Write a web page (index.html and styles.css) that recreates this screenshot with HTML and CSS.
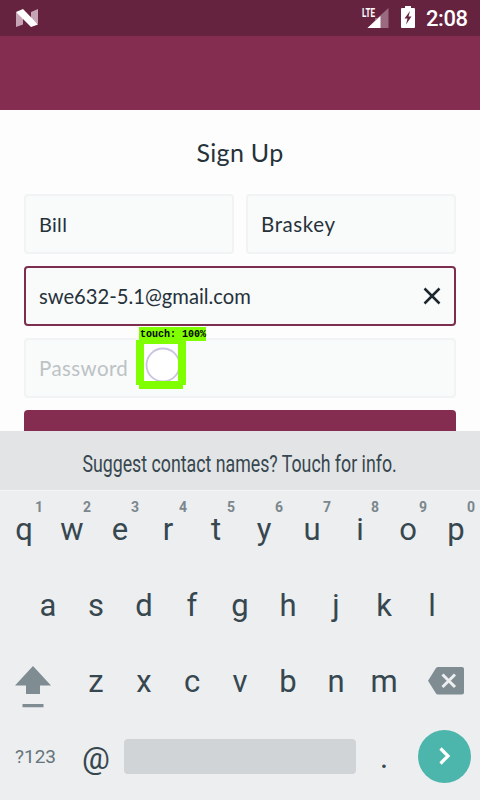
FILE: index.html
```html
<!DOCTYPE html>
<html lang="en">
<head>
<meta charset="utf-8">
<title>Sign Up</title>
<link rel="stylesheet" href="styles.css">
</head>
<body>
<div class="screen">
  <header class="status">
    <svg class="nlogo" width="22" height="18" viewBox="0 0 22 18"><path fill="#c6a4b5" d="M0 3 7 8V15.500L0 18ZM15 3 22 0V15L15 10Z"/><path fill="#fff" d="M0 3 7 0 22 15.500 15 18Z"/></svg>
    <div class="status-right">
      <svg class="signal" width="27" height="22" viewBox="0 0 27 22"><path fill="#9a6b80" d="M26.500 1V21H5.500L13 13.500V11H15.500Z"/><path fill="#fff" d="M18.500 9V21H5.500Z"/><text class="lte" x="0" y="10" textLength="13" lengthAdjust="spacingAndGlyphs">LTE</text></svg>
      <svg class="battery" width="14" height="22" viewBox="0 0 14 22"><path fill="#fff" d="M4 0H10V2H13Q14 2 14 3V21Q14 22 13 22H1Q0 22 0 21V3Q0 2 1 2H4Z"/><path fill="#66233f" d="M9 5 3.500 12.500H6.500L5 18.500 10.500 10.500H7.500Z"/></svg>
      <span class="clock">2:08</span>
    </div>
  </header>
  <div class="appbar"></div>
  <main class="content">
    <h1 class="title">Sign Up</h1>
    <div class="names">
      <div class="field"><span class="bill">Bill</span></div>
      <div class="field"><span class="last">Braskey</span></div>
    </div>
    <div class="field active"><span class="email">swe632-5.1@gmail.com</span>
      <svg width="18" height="18" viewBox="0 0 18 18"><path d="M1.500 1.500 16.500 16.500M16.500 1.500 1.500 16.500" stroke="#1d2730" stroke-width="2.500"/></svg>
    </div>
    <div class="field"><span class="placeholder">Password</span>
      <div class="touch">
        <span class="touch-label">touch: 100%</span>
        <svg width="50" height="49" viewBox="0 0 50 49"><path fill="#fff" d="M7 4H43V42H7Z"/><circle cx="27" cy="25" r="16.500" fill="none" stroke="#cbc4e0" stroke-width="1.800"/><path fill="#80ff00" fill-rule="evenodd" d="M0 0H50V45H47V49H3V45H0ZM8 4V41H42V4Z"/></svg>
      </div>
    </div>
    <div class="submit"></div>
  </main>
  <section class="keyboard">
    <div class="suggest"><span>Suggest contact names? Touch for info.</span></div>
    <div class="row">
      <div class="key">q<sup>1</sup></div><div class="key">w<sup>2</sup></div><div class="key">e<sup>3</sup></div><div class="key">r<sup>4</sup></div><div class="key">t<sup>5</sup></div><div class="key">y<sup>6</sup></div><div class="key">u<sup>7</sup></div><div class="key">i<sup>8</sup></div><div class="key">o<sup>9</sup></div><div class="key">p<sup>0</sup></div>
    </div>
    <div class="row middle">
      <div class="key">a</div><div class="key">s</div><div class="key">d</div><div class="key">f</div><div class="key">g</div><div class="key">h</div><div class="key">j</div><div class="key">k</div><div class="key">l</div>
    </div>
    <div class="row">
      <div class="key wide"><svg class="shift" width="36" height="42" viewBox="0 0 36 42"><path fill="#7f8c92" d="M18 0 36 19.500H25V28H11V19.500H0ZM7.500 38H28.500V41.300H7.500Z"/></svg></div>
      <div class="key">z</div><div class="key">x</div><div class="key">c</div><div class="key">v</div><div class="key">b</div><div class="key">n</div><div class="key">m</div>
      <div class="key wide"><svg class="delete" width="36" height="28" viewBox="0 0 36 28"><path fill="#7f8c92" d="M10 0H34Q36 0 36 2V25.500Q36 27.500 34 27.500H10Q8.800 27.500 8 26.500L0 13.800 8 1Q8.800 0 10 0Z"/><path d="M14.500 7.500 27 20M27 7.500 14.500 20" stroke="#eceef0" stroke-width="3"/></svg></div>
    </div>
    <div class="row">
      <div class="key wide symbols">?123</div>
      <div class="key at">@</div>
      <div class="space"></div>
      <div class="key period">.</div>
      <div class="enter"><svg width="12" height="18" viewBox="0 0 12 18"><path d="M1.500 1.500 9 9 1.500 16.500" fill="none" stroke="#fff" stroke-width="3.200"/></svg></div>
    </div>
  </section>
</div>
</body>
</html>
```

FILE: styles.css
```css
* { box-sizing: border-box; }
body { margin: 0; background: #fdfdfd; font-family: Roboto, sans-serif; }
svg { display: block; flex: none; }
.screen { width: 480px; height: 800px; overflow: hidden; display: flex; flex-direction: column; }
.status { height: 36px; flex: none; background: #66233f; display: flex; justify-content: space-between; padding: 0 12px 0 16px; }
.nlogo { margin-top: 9px; }
.status-right { display: flex; }
.signal { margin-top: 7px; overflow: visible; }
.battery { margin: 6px 0 0 12px; }
.lte { font: 700 13px Roboto, sans-serif; fill: #fff; }
.clock { color: #fff; font-size: 22px; font-weight: 500; line-height: 38px; margin-left: 11px; width: 42px; white-space: nowrap; letter-spacing: -0.4px; }
.appbar { height: 74px; flex: none; background: #842d50; }
.content { height: 321px; flex: none; overflow: hidden; padding: 26px 24px 0; display: flex; flex-direction: column; gap: 12px; font-family: Lato, sans-serif; color: #26323a; }
.title { margin: 0 0 16px; height: 30px; line-height: 32px; text-align: center; font-size: 25px; font-weight: 400; letter-spacing: 0.3px; }
.names { display: flex; gap: 12px; }
.names .field { flex: 1; }
.field { height: 60px; flex: none; border: 2px solid #f2f3f4; border-radius: 4px; background: #f9fafa; display: flex; align-items: center; padding: 0 13px; font-size: 20px; position: relative; }
.bill { letter-spacing: 0.3px; }
.last { font-size: 20.5px; letter-spacing: 0.6px; }
.email { font-size: 20.2px; }
.active { border-color: #7d2d4d; justify-content: space-between; }
.active svg { margin-top: -1px; }
.placeholder { color: #bcc3c5; font-size: 20.5px; letter-spacing: 0.4px; }
.touch { position: absolute; left: 110px; top: 0; }
.touch-label { position: absolute; left: 3px; top: -13px; width: 67px; height: 14px; background: #80ff00; color: #000; font: 700 10px/15px "Liberation Mono", monospace; padding-left: 1px; white-space: nowrap; }
.submit { flex: none; height: 60px; border-radius: 4px; background: #842d50; }
.keyboard { flex: 1; background: #eceef0; color: #37474f; }
.suggest { height: 60px; background: #e3e4e6; border-bottom: 1px solid #f3f4f5; display: flex; justify-content: center; align-items: center; padding-top: 7px; font-size: 23px; white-space: nowrap; }
.suggest span { transform: scaleX(.772); }
.row { height: 76px; display: flex; align-items: center; }
.middle { padding: 0 24px; }
.key { width: 48px; height: 76px; flex: none; position: relative; display: flex; justify-content: center; align-items: center; font-size: 31px; line-height: 36px; padding-top: 2px; }
.key sup { position: absolute; right: 5px; top: 8px; font-size: 14px; line-height: 16px; font-weight: 700; color: #7b878d; }
.wide { width: 72px; }
.shift { margin: 10px 6px 0 0; }
.delete { margin: -2px 0 0 3px; }
.symbols { font-size: 19px; color: #66747b; padding: 0 1px 0 0; }
.at { padding-top: 3px; }
.space { width: 232px; height: 35px; margin: -2px 0 0 4px; border-radius: 4px; background: #d0d4d7; }
.period { margin-left: 4px; }
.enter { width: 53px; height: 53px; margin: -2px 0 0 10px; border-radius: 50%; background: #4db6ac; display: flex; align-items: center; justify-content: center; }
```
